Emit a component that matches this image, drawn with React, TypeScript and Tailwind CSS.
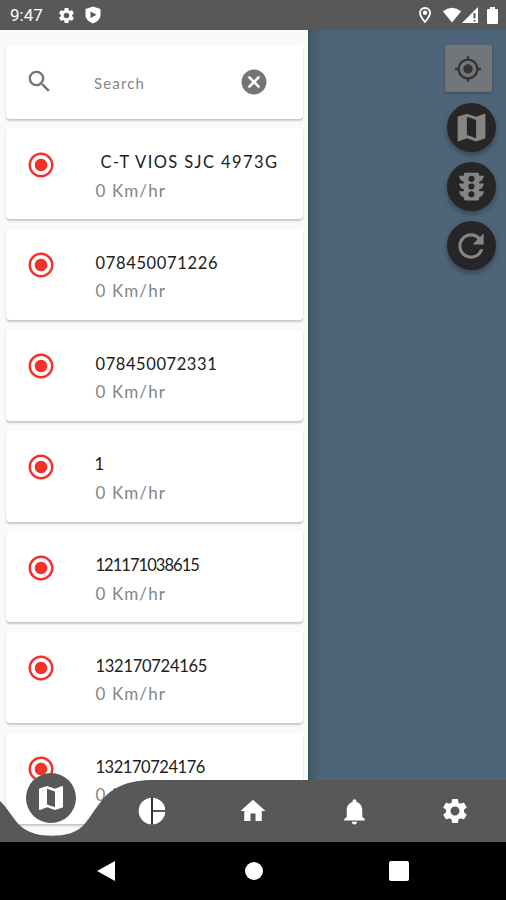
/**
 * App.tsx - Vehicle tracking screen
 *
 * Map view with the device drawer open, floating map controls
 * and the curved bottom navigation.
 */

import { ReactNode } from 'react';
import {
  MdCancel,
  MdGpsFixed,
  MdHome,
  MdMap,
  MdNotifications,
  MdRadioButtonChecked,
  MdRefresh,
  MdSearch,
  MdSettings,
  MdTraffic,
} from 'react-icons/md';

interface Device {
  name: string;
  speed: string;
  nameClass: string;
}

const devices: Device[] = [
  { name: 'C-T VIOS SJC 4973G', speed: '0 Km/hr', nameClass: 'pl-[5px] tracking-[1.4px]' },
  { name: '078450071226', speed: '0 Km/hr', nameClass: 'tracking-[0.65px]' },
  { name: '078450072331', speed: '0 Km/hr', nameClass: 'tracking-[0.58px]' },
  { name: '1', speed: '0 Km/hr', nameClass: '-ml-[1px]' },
  { name: '121171038615', speed: '0 Km/hr', nameClass: 'tracking-[-0.95px]' },
  { name: '132170724165', speed: '0 Km/hr', nameClass: 'tracking-[-0.27px]' },
  { name: '132170724176', speed: '0 Km/hr', nameClass: 'tracking-[-0.45px]' },
];

const StatusBar = () => (
  <header className="relative z-10 flex h-[30px] shrink-0 items-center bg-[#585858] text-white">
    <span className="ml-[10px] w-[36px] pt-[1px] font-['Roboto',sans-serif] text-[17px] leading-none">9:47</span>
    <MdSettings className="ml-[11px] size-[19px]" />
    {/* play protect shield */}
    <svg viewBox="0 0 16 18" className="ml-[9px] h-[18px] w-[16px]">
      <path fill="currentColor" fillRule="evenodd" d="M8 .5 15.5 3v6c0 4-3.5 7-7.5 8.5C4 16 .5 13 .5 9V3zM5.5 5.5v6.500l6-3.250z" />
    </svg>
    <svg viewBox="0 0 14 18" className="ml-auto h-[18px] w-[14px]">
      <path
        d="M7 2C4 2 2 4 2 6.800 2 10.300 7 16 7 16s5-5.700 5-9.200C12 4 10 2 7 2z"
        fill="none"
        stroke="currentColor"
        strokeWidth="1.8"
      />
      <circle cx="7" cy="6.8" r="2.2" fill="currentColor" />
    </svg>
    <svg viewBox="0 0 20 16" className="ml-[10px] h-[16px] w-[20px]">
      <path fill="currentColor" d="M10 15.500.8 4.300Q10-3 19.200 4.300z" />
    </svg>
    <svg viewBox="0 0 16 16" className="h-[16px] w-[16px]">
      <path fill="currentColor" d="M0 16 16 0v16z" />
      <path fill="#585858" d="M11.500 6h2v5.500h-2zM11.500 13h2v1.500h-2z" />
    </svg>
    <svg viewBox="0 0 11 17" className="mr-[8px] ml-[9px] h-[17px] w-[11px]">
      <path fill="currentColor" d="M3 0h5v2h2q1 0 1 1v13q0 1-1 1H1q-1 0-1-1V3q0-1 1-1h2z" />
    </svg>
  </header>
);

const Card = ({ children, className = '' }: { children: ReactNode; className?: string }) => (
  <div className={`flex shrink-0 rounded-[4px] bg-white shadow-[0_2px_2px_rgba(0,0,0,0.2),0_0_2px_rgba(0,0,0,0.06)] ${className}`}>
    {children}
  </div>
);

const DeviceCard = ({ device }: { device: Device }) => (
  <Card className="h-[91.3px] pt-[22px] pl-[20px]">
    <MdRadioButtonChecked className="-mt-[0.5px] size-[30px] shrink-0 text-[#f4302b]" />
    <div className="ml-[40px] flex flex-col pt-[1px] whitespace-nowrap">
      <span className={`h-[28.5px] text-[16.5px] leading-[23px] text-[#202020] ${device.nameClass}`}>
        {device.name}
      </span>
      <span className="text-[17px] leading-[22px] tracking-[1.1px] text-[#858585]">{device.speed}</span>
    </div>
  </Card>
);

const Drawer = () => (
  <aside className="relative flex w-[308px] shrink-0 flex-col gap-[9.5px] overflow-hidden bg-[#fafafa] px-[5.5px] pt-[15px]">
    <Card className="h-[73.5px] items-center">
      <MdSearch className="ml-[19px] size-[29px] text-[#757575]" />
      <span className="ml-[40.5px] w-[148px] pt-[2px] text-[15px] tracking-[1.15px] text-[#858585]">Search</span>
      <MdCancel className="-ml-[3px] size-[30px] text-[#757575]" />
    </Card>
    {devices.map((device) => (
      <DeviceCard key={device.name} device={device} />
    ))}
  </aside>
);

const RoundButton = ({ children }: { children: ReactNode }) => (
  <button className="flex size-[49px] items-center justify-center rounded-full bg-[#262626] text-[#858585] shadow-[0_3px_5px_rgba(0,0,0,0.3)]">
    {children}
  </button>
);

const MapArea = () => (
  <main className="flex flex-1 flex-col items-end bg-[#4e6478] pt-[15px] pr-[10.5px] shadow-[inset_14px_0_12px_-10px_rgba(62,82,90,0.9),inset_1px_0_1px_#294960]">
    <button className="mr-[4px] flex size-[47px] items-center justify-center rounded-[2px] bg-[#737678] text-[#333] shadow-[0_1px_3px_rgba(0,0,0,0.3)]">
      <MdGpsFixed className="size-[28px]" />
    </button>
    <div className="mt-[11px] flex flex-col gap-[10px]">
      <RoundButton>
        <MdMap className="size-[37px]" />
      </RoundButton>
      <RoundButton>
        <MdTraffic className="size-[37px]" />
      </RoundButton>
      <RoundButton>
        <MdRefresh className="size-[38px]" />
      </RoundButton>
    </div>
  </main>
);

const BottomNav = () => (
  <nav className="relative z-10 -mt-[62px] h-[62px] shrink-0 text-white">
    {/* bar with the dip under the active tab */}
    <svg viewBox="0 0 506 62" className="absolute inset-0 h-[62px] w-[506px]">
      <path
        fill="#585858"
        d="M0 21C7 27 13 39 21 46.500 30 53.500 40 55.700 51 55.700 66 55.700 77 53 85 43.500 91 36 96 27 103 19 113 7 129 0 154 0H506V62H0z"
      />
    </svg>
    <div className="relative grid h-full grid-cols-5 items-center justify-items-center">
      <div className="-mt-[27px] flex size-[50px] items-center justify-center rounded-full bg-[#585858]">
        <MdMap className="size-[32px]" />
      </div>
      <svg viewBox="0 0 28 28" className="size-[28px]">
        <circle cx="14" cy="14" r="13.3" fill="currentColor" />
        <path d="M15 14h13" stroke="#585858" strokeWidth="2" />
        <path d="M14 .5v27" stroke="#1c1c1c" strokeWidth="1.8" />
      </svg>
      <MdHome className="size-[30px]" />
      <MdNotifications className="size-[31px]" />
      <MdSettings className="size-[30px]" />
    </div>
  </nav>
);

const SystemNav = () => (
  <footer className="flex h-[58px] shrink-0 items-center bg-black">
    <svg viewBox="0 0 18 20" className="ml-[97px] h-[20px] w-[18px]">
      <path fill="white" d="M18 0v20L0 10z" />
    </svg>
    <div className="ml-[130px] size-[18px] rounded-full bg-white" />
    <div className="ml-[126px] size-[20px] rounded-[2px] bg-white" />
  </footer>
);

const App = () => (
  <div className="flex h-[900px] w-[506px] flex-col overflow-hidden bg-white font-['Lato','Liberation_Sans',sans-serif]">
    <StatusBar />
    <div className="flex h-[812px] shrink-0 overflow-hidden">
      <Drawer />
      <MapArea />
    </div>
    <BottomNav />
    <SystemNav />
  </div>
);

export default App;
